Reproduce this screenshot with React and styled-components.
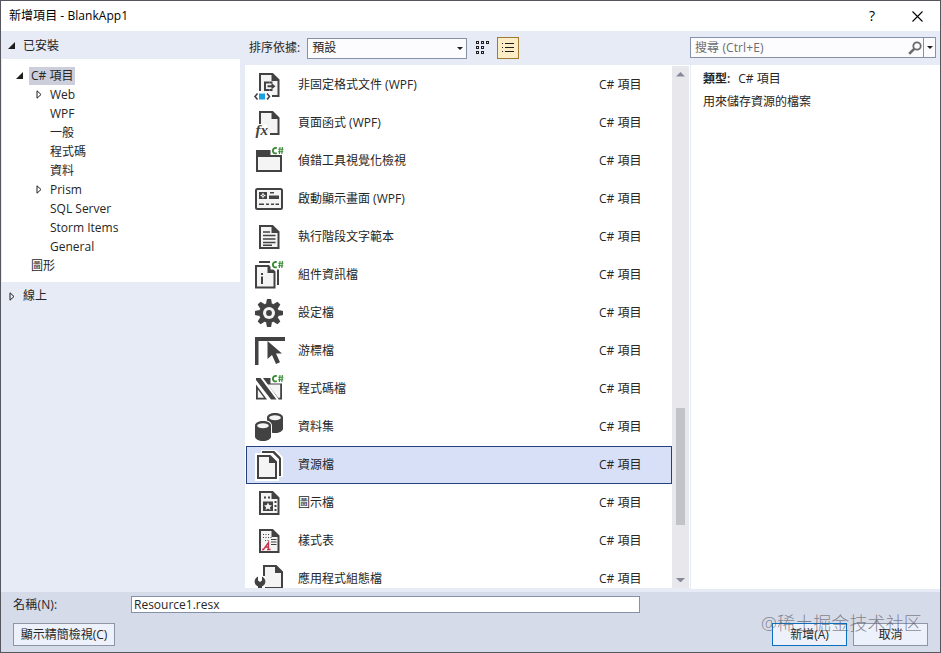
import React, { useState } from "react";
import styled, { createGlobalStyle } from "styled-components";

const GlobalStyle = createGlobalStyle`
  * {
    box-sizing: border-box;
  }
  body {
    margin: 0;
    overflow: hidden;
  }
  button,
  input {
    font: inherit;
    color: inherit;
    letter-spacing: inherit;
  }
`;

const Window = styled.div`
  display: flex;
  flex-direction: column;
  width: 941px;
  height: 653px;
  border: 1px solid #55565e;
  background: #e6ebf5;
  color: #262626;
  font-family: "Open Sans", "Noto Sans CJK TC", sans-serif;
  font-size: 12px;
  line-height: 18px;
  white-space: nowrap;
`;

const TitleBar = styled.header`
  display: flex;
  align-items: center;
  height: 30px;
  padding: 0 17px 0 8px;
  background: #fff;
  color: #000;
  h1 {
    flex: 1;
    margin: 0;
    font-size: 12px;
    font-weight: 400;
    letter-spacing: 0.05px;
  }
`;

const TitleButton = styled.button`
  display: flex;
  align-items: center;
  justify-content: center;
  width: 12px;
  height: 20px;
  margin-left: ${(props) => props.$gap || 0}px;
  padding: 0;
  border: 0;
  background: none;
  font-size: 14px;
  font-weight: 500;
`;

const Main = styled.div`
  display: flex;
  height: 561px;
`;

const Sidebar = styled.nav`
  width: 239px;
`;

const Group = styled.div`
  display: flex;
  align-items: center;
  height: 28px;
  padding: ${(props) => props.$top || 0}px 0 0 6px;
  gap: 7px;
`;

const Tree = styled.div`
  padding: 7px 0;
  margin-left: 1px;
  background: #fff;
`;

const TreeRow = styled.div`
  display: flex;
  align-items: center;
  height: 19px;
  padding-left: ${(props) => 13 + props.$level * 19}px;
  gap: 5px;
  span {
    padding: 0 2px;
    background: ${(props) => (props.$active ? "#cccedb" : "none")};
  }
`;

const Arrow = styled.svg`
  flex: none;
  width: 9px;
  height: 9px;
`;

const Center = styled.section`
  display: flex;
  flex-direction: column;
  width: 445px;
  margin-left: 5px;
`;

const SortBar = styled.div`
  display: flex;
  align-items: center;
  height: 34px;
  padding-left: 4px;
`;

const Combo = styled.div`
  display: flex;
  align-items: center;
  justify-content: space-between;
  width: 160px;
  height: 21px;
  margin-left: 7px;
  padding: 0 3px 0 4px;
  border: 1px solid #8591a8;
  background: #fcfcfe;
`;

const ViewButton = styled.button`
  display: flex;
  align-items: center;
  justify-content: center;
  width: 22px;
  height: 22px;
  margin-left: ${(props) => props.$gap}px;
  padding: 0;
  border: 1px solid ${(props) => (props.$on ? "#a07a30" : "transparent")};
  background: ${(props) => (props.$on ? "#fdedc6" : "none")};
`;

const ListPane = styled.div`
  display: flex;
  height: 523px;
  padding-top: 1px;
  background: #fff;
  overflow: hidden;
`;

const List = styled.div`
  width: 426px;
  margin-left: 1px;
`;

const Item = styled.div`
  display: flex;
  align-items: center;
  height: 38px;
  padding-left: 6px;
  border: 1px solid ${(props) => (props.$selected ? "#24417d" : "transparent")};
  background: ${(props) => (props.$selected ? "#d8e0f8" : "none")};
  svg {
    flex: none;
  }
  span {
    width: 314px;
    padding-left: 13px;
  }
`;

const Scrollbar = styled.div`
  display: flex;
  flex-direction: column;
  align-items: center;
  width: 17px;
  padding: 6px 0 6px;
  background: #e8e8ec;
`;

const Thumb = styled.div`
  width: 9px;
  height: 117px;
  margin: 331px 0 auto;
  background: #c2c3c9;
`;

const Aside = styled.aside`
  width: 250px;
  padding-top: 6px;
`;

const Search = styled.div`
  display: flex;
  align-items: center;
  width: 246px;
  height: 21px;
  border: 1px solid #8591a8;
  background: #fcfcfe;
  color: #6d6d6d;
  span {
    flex: 1;
    padding-left: 4px;
    letter-spacing: 0.1px;
  }
`;

const SearchDrop = styled.div`
  display: flex;
  align-items: center;
  justify-content: center;
  width: 12px;
  height: 19px;
  margin-left: 1px;
  border-left: 1px solid #8591a8;
`;

const Details = styled.div`
  height: 524px;
  margin: 7px 0 0 1px;
  padding: 5px 12px;
  background: #fff;
  p {
    margin: 0 0 5px;
  }
  b {
    margin-right: 8px;
    font-weight: 600;
  }
`;

const Footer = styled.footer`
  flex: 1;
  padding: 4px 12px 0;
  background: #d6dbe9;
`;

const NameRow = styled.label`
  display: flex;
  align-items: center;
  height: 17px;
  span {
    width: 118px;
    letter-spacing: 0.2px;
  }
  input {
    width: 509px;
    height: 17px;
    padding: 0 2px;
    border: 1px solid #8591a8;
    background: #fff;
  }
`;

const Buttons = styled.div`
  display: flex;
  gap: 6px;
  margin-top: 10px;
`;

const Button = styled.button`
  width: ${(props) => props.$width}px;
  height: 23px;
  margin-left: ${(props) => (props.$push ? "auto" : 0)};
  padding: 0;
  border: 1px solid ${(props) => (props.$primary ? "#0a6fbf" : "#8d95a6")};
  background: #edf1fc;
  line-height: 21px;
`;

const Watermark = styled.div`
  position: absolute;
  left: 761px;
  top: 610px;
  color: rgba(90, 90, 100, 0.7);
  font-family: "Open Sans", "Noto Sans CJK SC", sans-serif;
  font-size: 18px;
  font-weight: 300;
  letter-spacing: 0.1px;
  line-height: 26px;
  white-space: nowrap;
  pointer-events: none;
`;

const INK = "#424242";
const PAPER = "#f4f4f4";

const Page = ({ x = 7, y = 5, w = 18.5, h = 22 }) => (
  <g>
    <path
      d={`M${x} ${y}h${w - 6}l6 6v${h - 6}h${-w}z`}
      fill={PAPER}
      stroke={INK}
      strokeWidth="2"
    />
    <path d={`M${x + w - 7} ${y}h1l6 6v1h-7z`} fill={INK} />
  </g>
);

const CSharp = () => (
  <g>
    <rect x="17.5" y="0" width="14.5" height="10.5" fill="#fff" />
    <path
      d="M27 2l-.6 7M29.4 2l-.6 7M25.2 4.2h5.2M25 6.8h5.2"
      fill="none"
      stroke="#388a34"
      strokeWidth="1.1"
    />
    <path d="M23.8 3.200c-2.400-.8-3.900.6-3.900 2.500s1.500 3.200 3.900 2.400" fill="none" stroke="#388a34" strokeWidth="1.900" />
  </g>
);

const Drum = ({ x, y }) => (
  <g transform={`translate(${x} ${y})`}>
    <path d="M0 4.5C0 1.8 3.5 0 8 0s8 1.8 8 4.5v11c0 2.7-3.5 4.5-8 4.5s-8-1.8-8-4.5z" fill={INK} />
    <ellipse cx="8" cy="4.7" rx="5.8" ry="2.5" fill="#f4f4f4" />
  </g>
);

const icons = {
  fixed: (
    <>
      <path d="M7 22V5h12.500l6 6v16H19" fill={PAPER} stroke={INK} strokeWidth="2" />
      <path d="M18.500 5h1l6 6v1h-7z" fill={INK} />
      <path d="M16.500 13.500H12v7.500h4.500M14.500 17.200h5" fill="none" stroke={INK} strokeWidth="2" />
      <path d="M16.500 12.500h3v2h-3zM16.500 20h3v2h-3zM18.500 14l4 3.200-4 3.200z" fill={INK} />
      <path d="M0 23.500h18V32H0z" fill="#fff" />
      <path d="M4.500 24.500L2 27.500l2.500 3M14 24.500l2.500 3-2.500 3" fill="none" stroke={INK} strokeWidth="1.600" />
      <path d="M6 24.500h6v6H6z" fill="#1ba1e2" />
    </>
  ),
  func: (
    <>
      <path d="M7 17V5h12.5l6 6v16H17" fill={PAPER} stroke={INK} strokeWidth="2" />
      <path d="M18.5 5h1l6 6v1h-7z" fill={INK} />
      <path d="M1 17.500h13V31H1z" fill="#fff" />
      <text x="2.5" y="28" fill={INK} fontFamily="Liberation Serif, serif" fontSize="15" fontStyle="italic" fontWeight="700">
        fx
      </text>
    </>
  ),
  windowCs: (
    <>
      <path d="M4 6h24v20H4z" fill={PAPER} stroke={INK} strokeWidth="2" />
      <path d="M3 5h26v7H3z" fill={INK} />
      <CSharp />
      <path d="M17 10h12v2H17z" fill={INK} />
    </>
  ),
  splash: (
    <>
      <rect x="3" y="6" width="26" height="20" rx="1.5" fill={PAPER} stroke={INK} strokeWidth="2" />
      <path d="M6 9h8v7H6zM17 9h4v1.6h-4zM16 12.5h10v3.6H16zM6 20.5h5V22H6zM13 20.5h3V22h-3zM18 20.5h3V22h-3zM22.5 20.5H26V22h-3.500z" fill={INK} />
      <path d="M10 9.500l1 2 2 1-2 1-1 2-1-2-2-1 2-1z" fill={PAPER} />
      <circle cx="10" cy="12.500" r=".7" fill={INK} />
    </>
  ),
  text: (
    <>
      <Page />
      <path d="M10 11h7M10 14.500h12.500M10 18h12.500M10 21.500h12.500M10 24.200h9" stroke={INK} strokeWidth="1.500" />
    </>
  ),
  assembly: (
    <>
      <path d="M6 3h11M25 10v16" fill="none" stroke={INK} strokeWidth="2" />
      <Page x={3} y={7} w={18.5} h={21.5} />
      <path d="M8 14h2v2H8zM8 17.500h2V25H8z" fill={INK} />
      <CSharp />
    </>
  ),
  gear: (
    <>
      <g fill={INK}>
        <circle cx="16" cy="16" r="10" />
        {[0, 45, 90, 135].map((a) => (
          <path key={a} d="M13.300 5l.7-3h4l.7 3v22l-.7 3h-4l-.7-3z" transform={`rotate(${a} 16 16)`} />
        ))}
      </g>
      <circle cx="16" cy="16" r="6" fill={PAPER} />
      <circle cx="16" cy="16" r="2.900" fill={INK} />
    </>
  ),
  cursor: (
    <>
      <path d="M2 2h30v4H5.500v24H2z" fill={INK} />
      <path d="M14.500 6v18l4.500-4 4 9 4-1.800-4-8.700h6z" fill={INK} />
    </>
  ),
  codeCs: (
    <>
      <path d="M9 5h20v21.500h-4L9 5z" fill={INK} />
      <path d="M14.500 11.500H27.200v13.300h-2z" fill={PAPER} />
      <path d="M3 11.500l11 15H3z" fill={INK} />
      <path d="M4.800 16.500l6.200 8.300H4.800z" fill={PAPER} />
      <path d="M7 5h3l16 21.500h-3z" fill="#fff" />
      <path d="M3 5h4.500l16 21.500h-5.500L3 7z" fill={INK} />
      <CSharp />
    </>
  ),
  data: (
    <>
      <Drum x={14} y={2} />
      <path d="M1 15c0-4 4-6 9-6s9 2 9 6v12H1z" fill="#fff" />
      <Drum x={2} y={10} />
    </>
  ),
  resource: (
    <>
      <path d="M2 4h6V1h15l7 7v20h-4v4H2z" fill="#fff" />
      <path d="M9 3h11.500l6.500 6.500V27" fill="none" stroke={INK} strokeWidth="2" />
      <path d="M19 3l8 8V8l-6-6z" fill={INK} />
      <Page x={5} y={7} w={18} h={22} />
    </>
  ),
  iconFile: (
    <>
      <Page />
      <path d="M11 9.500h2v2h-2zM15 9.500h2v2h-2zM21.500 14h2v2h-2zM21.500 18h2v2h-2zM21.500 22h2v2h-2zM10 14.500h10V24H10z" fill={INK} />
      <path d="M15 15.500l1.200 2.600 2.800.3-2.100 1.900.6 2.700-2.500-1.400-2.500 1.400.6-2.700-2.100-1.900 2.800-.3z" fill={PAPER} />
    </>
  ),
  style: (
    <>
      <Page />
      <path d="M10 9.500h7M10 12.500h9M12 15.500h4" stroke={INK} strokeDasharray="1 1.500" />
      <path d="M18 14.500h5.500M18 17h5.500M18 19.500h5.500" stroke={INK} />
      <path d="M9 24.500h1.500l5-7v7M12 22h3.500M14 24.500h3.500" fill="none" stroke="#c5304b" strokeWidth="1.300" />
    </>
  ),
  config: (
    <>
      <Page x={11} y={3} w={18} h={22} />
      <path d="M1 13h11v17H1z" fill="#fff" />
      <path d="M5 13.500v4l2 1.500 2-1.500v-4c4.500 2 4.500 8 0 10V30H5v-6.500c-4.500-2-4.500-8 0-10z" fill={INK} />
    </>
  ),
};

const items = [
  { icon: "fixed", name: "非固定格式文件 (WPF)" },
  { icon: "func", name: "頁面函式 (WPF)" },
  { icon: "windowCs", name: "偵錯工具視覺化檢視" },
  { icon: "splash", name: "啟動顯示畫面 (WPF)" },
  { icon: "text", name: "執行階段文字範本" },
  { icon: "assembly", name: "組件資訊檔" },
  { icon: "gear", name: "設定檔" },
  { icon: "cursor", name: "游標檔" },
  { icon: "codeCs", name: "程式碼檔" },
  { icon: "data", name: "資料集" },
  { icon: "resource", name: "資源檔" },
  { icon: "iconFile", name: "圖示檔" },
  { icon: "style", name: "樣式表" },
  { icon: "config", name: "應用程式組態檔" },
];

const tree = [
  { label: "C# 項目", level: 0, arrow: "open" },
  { label: "Web", level: 1, arrow: "closed" },
  { label: "WPF", level: 1 },
  { label: "一般", level: 1 },
  { label: "程式碼", level: 1 },
  { label: "資料", level: 1 },
  { label: "Prism", level: 1, arrow: "closed" },
  { label: "SQL Server", level: 1 },
  { label: "Storm Items", level: 1 },
  { label: "General", level: 1 },
  { label: "圖形", level: 0 },
];

const TreeArrow = ({ type }) => (
  <Arrow viewBox="0 0 9 9">
    {type === "open" && <path d="M8 1v7H1z" fill="#1e1e1e" />}
    {type === "closed" && <path d="M3 .8v7.400L7 4.500z" fill="none" stroke="#1e1e1e" />}
  </Arrow>
);

const Down = ({ color = "#1e1e1e", size = 6, up }) => (
  <svg width={size} height={size / 2} viewBox="0 0 6 3">
    <path d={up ? "M0 3h6L3 0z" : "M0 0h6L3 3z"} fill={color} />
  </svg>
);

const App = () => {
  const [selected, setSelected] = useState(10);
  const [name, setName] = useState("Resource1.resx");

  return (
    <>
      <GlobalStyle />
      <Window>
        <TitleBar>
          <h1>新增項目 - BlankApp1</h1>
          <TitleButton>?</TitleButton>
          <TitleButton $gap={33}>
            <svg width="11" height="11" viewBox="0 0 11 11">
              <path d="M.5.5l10 10M10.500.5l-10 10" stroke="#000" strokeWidth="1.100" />
            </svg>
          </TitleButton>
        </TitleBar>
        <Main>
          <Sidebar>
            <Group $top={1}>
              <TreeArrow type="open" />
              已安裝
            </Group>
            <Tree>
              {tree.map((node, idx) => (
                <TreeRow key={node.label} $level={node.level} $active={idx === 0}>
                  <TreeArrow type={node.arrow} />
                  <span>{node.label}</span>
                </TreeRow>
              ))}
            </Tree>
            <Group>
              <TreeArrow type="closed" />
              線上
            </Group>
          </Sidebar>
          <Center>
            <SortBar>
              排序依據:
              <Combo>
                預設
                <Down />
              </Combo>
              <ViewButton $gap={5}>
                <svg width="14" height="14" viewBox="0 0 14 14" fill="none" stroke="#1e1e1e">
                  {[0.5, 5.5, 10.5].map((y) =>
                    [0.5, 5.5, 10.5].map((x) =>
                      x > 10 && y > 5 ? null : <rect key={x + "-" + y} x={x} y={y} width="2" height="2" />
                    )
                  )}
                </svg>
              </ViewButton>
              <ViewButton $gap={3} $on>
                <svg width="12" height="10" viewBox="0 0 12 10" fill="#1e1e1e">
                  <path d="M0 0h1v1H0zM3 0h9v1H3zM0 4h1v1H0zM3 4h9v1H3zM0 8h1v1H0zM3 8h9v1H3z" />
                </svg>
              </ViewButton>
            </SortBar>
            <ListPane>
              <List>
                {items.map((item, idx) => (
                  <Item key={item.name} $selected={idx === selected} onClick={() => setSelected(idx)}>
                    <svg width="32" height="32" viewBox="0 0 32 32">
                      {icons[item.icon]}
                    </svg>
                    <span>{item.name}</span>
                    C# 項目
                  </Item>
                ))}
              </List>
              <Scrollbar>
                <Down up size={9} color="#868999" />
                <Thumb />
                <Down size={9} color="#868999" />
              </Scrollbar>
            </ListPane>
          </Center>
          <Aside>
            <Search>
              <span>搜尋 (Ctrl+E)</span>
              <svg width="14" height="14" viewBox="0 0 14 14" fill="none" stroke="#6a6a6a">
                <circle cx="9" cy="5" r="3.700" strokeWidth="1.800" />
                <path d="M6.200 7.800L1.200 12.800" strokeWidth="2.600" />
              </svg>
              <SearchDrop>
                <Down />
              </SearchDrop>
            </Search>
            <Details>
              <p>
                <b>類型:</b>C# 項目
              </p>
              <p>用來儲存資源的檔案</p>
            </Details>
          </Aside>
        </Main>
        <Footer>
          <NameRow>
            <span>名稱(N):</span>
            <input value={name} onChange={(e) => setName(e.target.value)} />
          </NameRow>
          <Buttons>
            <Button $width={102}>顯示精簡檢視(C)</Button>
            <Button $width={75} $push $primary>
              新增(A)
            </Button>
            <Button $width={75}>取消</Button>
          </Buttons>
        </Footer>
      </Window>
      <Watermark>@稀土掘金技术社区</Watermark>
    </>
  );
};

export default App;
